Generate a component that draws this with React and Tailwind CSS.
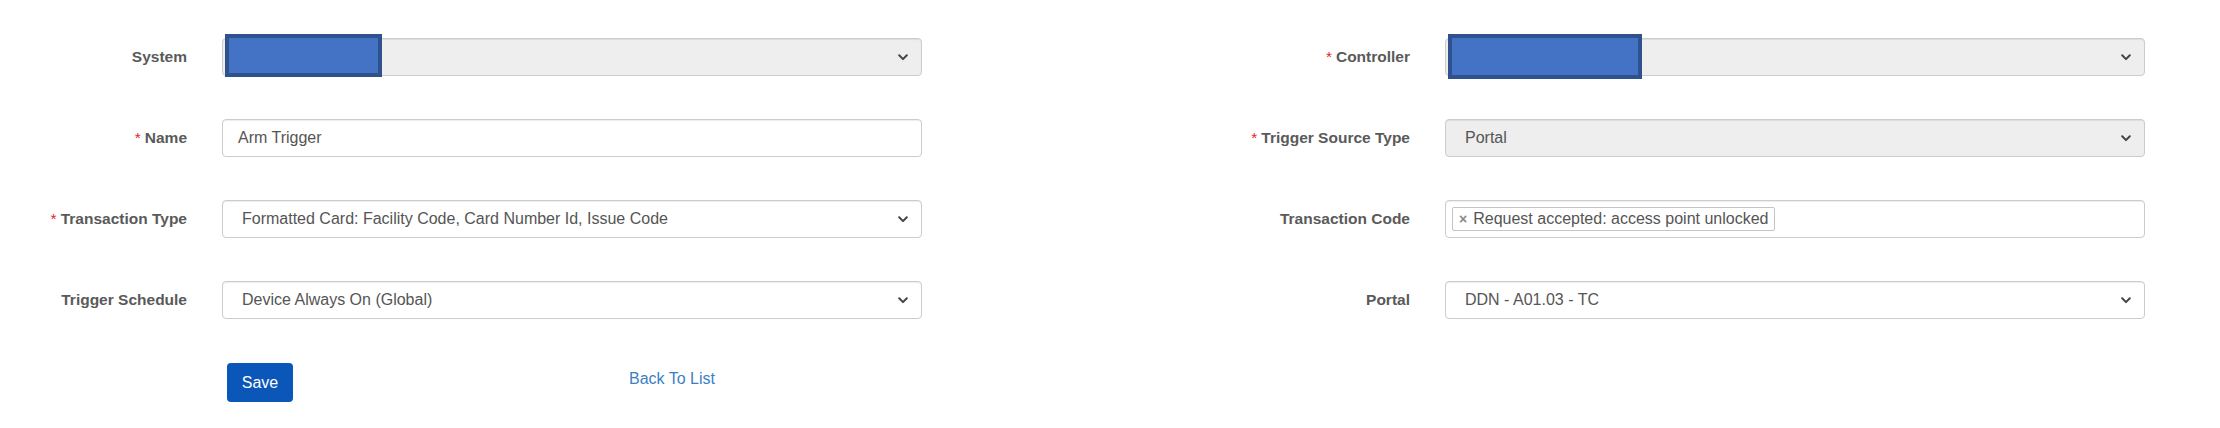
import React from 'react';

// small bold chevron like the native select arrow
const Chevron = () => (
    <svg width="10" height="7" viewBox="0 0 10 7" className="flex-none">
        <path d="M1.2 1.3 L5 5.1 L8.8 1.3" fill="none" stroke="#444" strokeWidth="2" strokeLinecap="round" strokeLinejoin="round" />
    </svg>
);

const Label = ({ text, required }) => (
    <div className="w-[222px] flex-none pr-[35px] text-right text-[15.5px] font-bold text-[#5a5a5a]">
        {required && <span className="text-[#e0282e] font-normal mr-[4px]">*</span>}
        {text}
    </div>
);

const fieldBase = 'relative w-[700px] h-[38px] flex-none flex items-center border border-[#ccc] rounded-[4px] shadow-[inset_0_1px_1px_rgba(0,0,0,0.075)] text-[16px] text-[#555]';

const SelectBox = ({ value, disabled, redact }) => (
    <div className={`${fieldBase} pl-[19px] pr-[13px] ${disabled ? 'bg-[#eeeeee]' : 'bg-white'}`}>
        <span className="flex-1 truncate">{value}</span>
        <Chevron />
        {redact && (
            <div
                className={`absolute left-[2px] top-[-5px] bg-[#4472c4] border-[4px] border-[#2f528f] ${redact === 'wide' ? 'w-[194px] h-[45px]' : 'w-[157px] h-[43px]'}`}
            />
        )}
    </div>
);

const TextBox = ({ value }) => (
    <div className={`${fieldBase} px-[15px] bg-white`}>
        <span>{value}</span>
    </div>
);

const TagBox = ({ tags }) => (
    <div className={`${fieldBase} px-[6px] bg-white`}>
        {tags.map((t) => (
            <span key={t} className="h-[24px] flex items-center gap-[6px] border border-[#c4c4c4] rounded-[2px] pl-[6px] pr-[6px] text-[16px] text-[#555] leading-none">
                <span className="text-[#888] text-[14px] font-bold">×</span>
                {t}
            </span>
        ))}
    </div>
);

const Row = ({ children }) => <div className="flex items-center h-[38px]">{children}</div>;

const App = () => {
    return (
        <div className="w-[2220px] h-[428px] bg-white pt-[38px] font-['Liberation_Sans',Arial,sans-serif]">
            <div className="flex">
                {/* cột trái */}
                <div className="w-[1223px] flex-none flex flex-col gap-[43px]">
                    <Row>
                        <Label text="System" />
                        <SelectBox value="" disabled redact="narrow" />
                    </Row>
                    <Row>
                        <Label text="Name" required />
                        <TextBox value="Arm Trigger" />
                    </Row>
                    <Row>
                        <Label text="Transaction Type" required />
                        <SelectBox value="Formatted Card: Facility Code, Card Number Id, Issue Code" />
                    </Row>
                    <Row>
                        <Label text="Trigger Schedule" />
                        <SelectBox value="Device Always On (Global)" />
                    </Row>
                </div>

                {/* cột phải */}
                <div className="flex-1 flex flex-col gap-[43px]">
                    <Row>
                        <Label text="Controller" required />
                        <SelectBox value="" disabled redact="wide" />
                    </Row>
                    <Row>
                        <Label text="Trigger Source Type" required />
                        <SelectBox value="Portal" disabled />
                    </Row>
                    <Row>
                        <Label text="Transaction Code" />
                        <TagBox tags={['Request accepted: access point unlocked']} />
                    </Row>
                    <Row>
                        <Label text="Portal" />
                        <SelectBox value="DDN - A01.03 - TC" />
                    </Row>
                </div>
            </div>

            {/* nút bấm */}
            <div className="flex items-start mt-[44px] pl-[227px]">
                <button className="w-[66px] h-[39px] bg-[#0b56b9] text-white text-[16px] rounded-[4px]">Save</button>
                <a className="ml-[336px] mt-[4px] text-[16px] text-[#3b7fc4]">Back To List</a>
            </div>
        </div>
    );
};

export default App;
